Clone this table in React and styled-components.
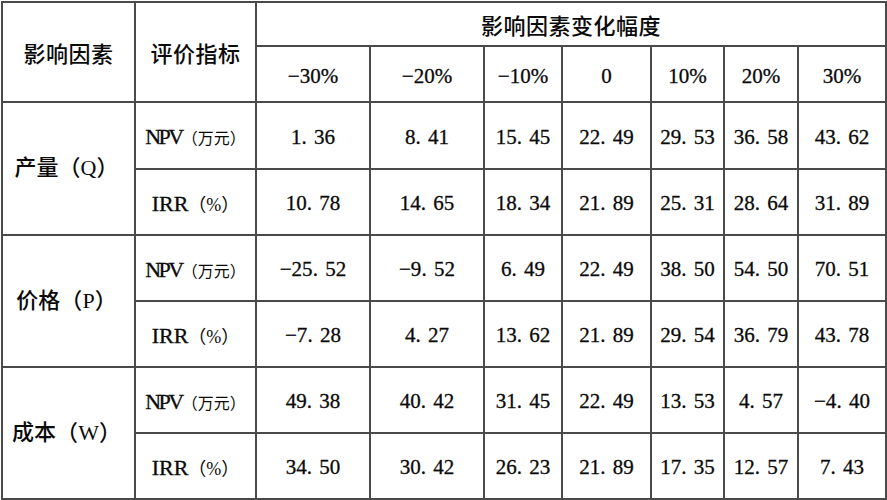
import React from 'react';
import styled, { createGlobalStyle } from 'styled-components';

const changes = ['−30%', '−20%', '−10%', '0', '10%', '20%', '30%'];
const colWidths = [133, 121, 114, 114, 78, 89, 73, 74, 88];

const factors = [
  {
    name: '产量',
    code: 'Q',
    npv: ['1.36', '8.41', '15.45', '22.49', '29.53', '36.58', '43.62'],
    irr: ['10.78', '14.65', '18.34', '21.89', '25.31', '28.64', '31.89'],
  },
  {
    name: '价格',
    code: 'P',
    npv: ['−25.52', '−9.52', '6.49', '22.49', '38.50', '54.50', '70.51'],
    irr: ['−7.28', '4.27', '13.62', '21.89', '29.54', '36.79', '43.78'],
  },
  {
    name: '成本',
    code: 'W',
    npv: ['49.38', '40.42', '31.45', '22.49', '13.53', '4.57', '−4.40'],
    irr: ['34.50', '30.42', '26.23', '21.89', '17.35', '12.57', '7.43'],
  },
];

// the source table uses a song font where "." takes half an em
const Num = ({ value }) => {
  const [whole, frac] = value.split('.');
  if (frac === undefined) return value;
  return (
    <>
      {whole}
      <Dot>.</Dot>
      {frac}
    </>
  );
};

export default () => {
  return (
    <>
      <GlobalStyle />
      <Table>
        <colgroup>
          {colWidths.map((w, i) => <col key={i} style={{ width: w }} />)}
        </colgroup>
        <thead>
          <Row $height={44}>
            <HeadCell rowSpan={2}>影响因素</HeadCell>
            <HeadCell rowSpan={2}>评价指标</HeadCell>
            <HeadCell colSpan={7}>影响因素变化幅度</HeadCell>
          </Row>
          <Row $height={56}>
            {changes.map((c) => (
              <ChangeCell key={c}>{c}</ChangeCell>
            ))}
          </Row>
        </thead>
        <tbody>
          {factors.map((f, fi) => (
            <React.Fragment key={f.code}>
              <Row $height={fi === 0 ? 67 : 66}>
                <FactorCell rowSpan={2}>
                  {f.name}（{f.code}）
                </FactorCell>
                <IndexCell>
                  <Abbr $tight>NPV</Abbr>
                  <Unit>（万元）</Unit>
                </IndexCell>
                {f.npv.map((v, i) => (
                  <Cell key={i}><Num value={v} /></Cell>
                ))}
              </Row>
              <Row $height={66}>
                <IndexCell>
                  <Abbr>IRR</Abbr>
                  <Unit $size={18}>（%）</Unit>
                </IndexCell>
                {f.irr.map((v, i) => (
                  <Cell key={i}><Num value={v} /></Cell>
                ))}
              </Row>
            </React.Fragment>
          ))}
        </tbody>
      </Table>
    </>
  );
};

const GlobalStyle = createGlobalStyle`
  html, body {
    margin: 0;
    padding: 0;
    background: #ffffff;
  }
`;

const Table = styled.table`
  margin: 1px 0 0 1px;
  width: 884px;
  table-layout: fixed;
  border-collapse: collapse;
  color: #0a0a0a;
  font-family: "Liberation Serif", "Noto Sans CJK SC", serif;

  td, th {
    border: 2px solid #4a4a4a;
    padding: 0;
    text-align: center;
    vertical-align: middle;
    line-height: 1.2;
  }
`;

const Row = styled.tr`
  height: ${(p) => p.$height}px;
`;

const HeadCell = styled.th`
  font-family: "Noto Sans CJK SC", sans-serif;
  font-size: 22px;
  font-weight: 500;
  letter-spacing: 0.5px;
`;

const ChangeCell = styled.th`
  font-size: 21px;
  font-weight: 400;
  padding-top: 6px !important;
  -webkit-text-stroke: 0.3px currentColor;
`;

const FactorCell = styled.td`
  font-size: 22px;
  font-weight: 500;
  padding-right: 4px !important;
`;

const IndexCell = styled.td`
  white-space: nowrap;
  padding-top: 4px !important;
`;

const Abbr = styled.span`
  font-size: 22px;
  letter-spacing: ${(p) => (p.$tight ? '-2.5px' : '0')};
  -webkit-text-stroke: 0.3px currentColor;
`;

const Unit = styled.span`
  font-size: ${(p) => p.$size || 16}px;
`;

const Cell = styled.td`
  font-size: 21px;
  white-space: nowrap;
  padding-top: 4px !important;
  -webkit-text-stroke: 0.3px currentColor;
`;

const Dot = styled.span`
  display: inline-block;
  width: 0.6em;
  text-align: left;
`;
